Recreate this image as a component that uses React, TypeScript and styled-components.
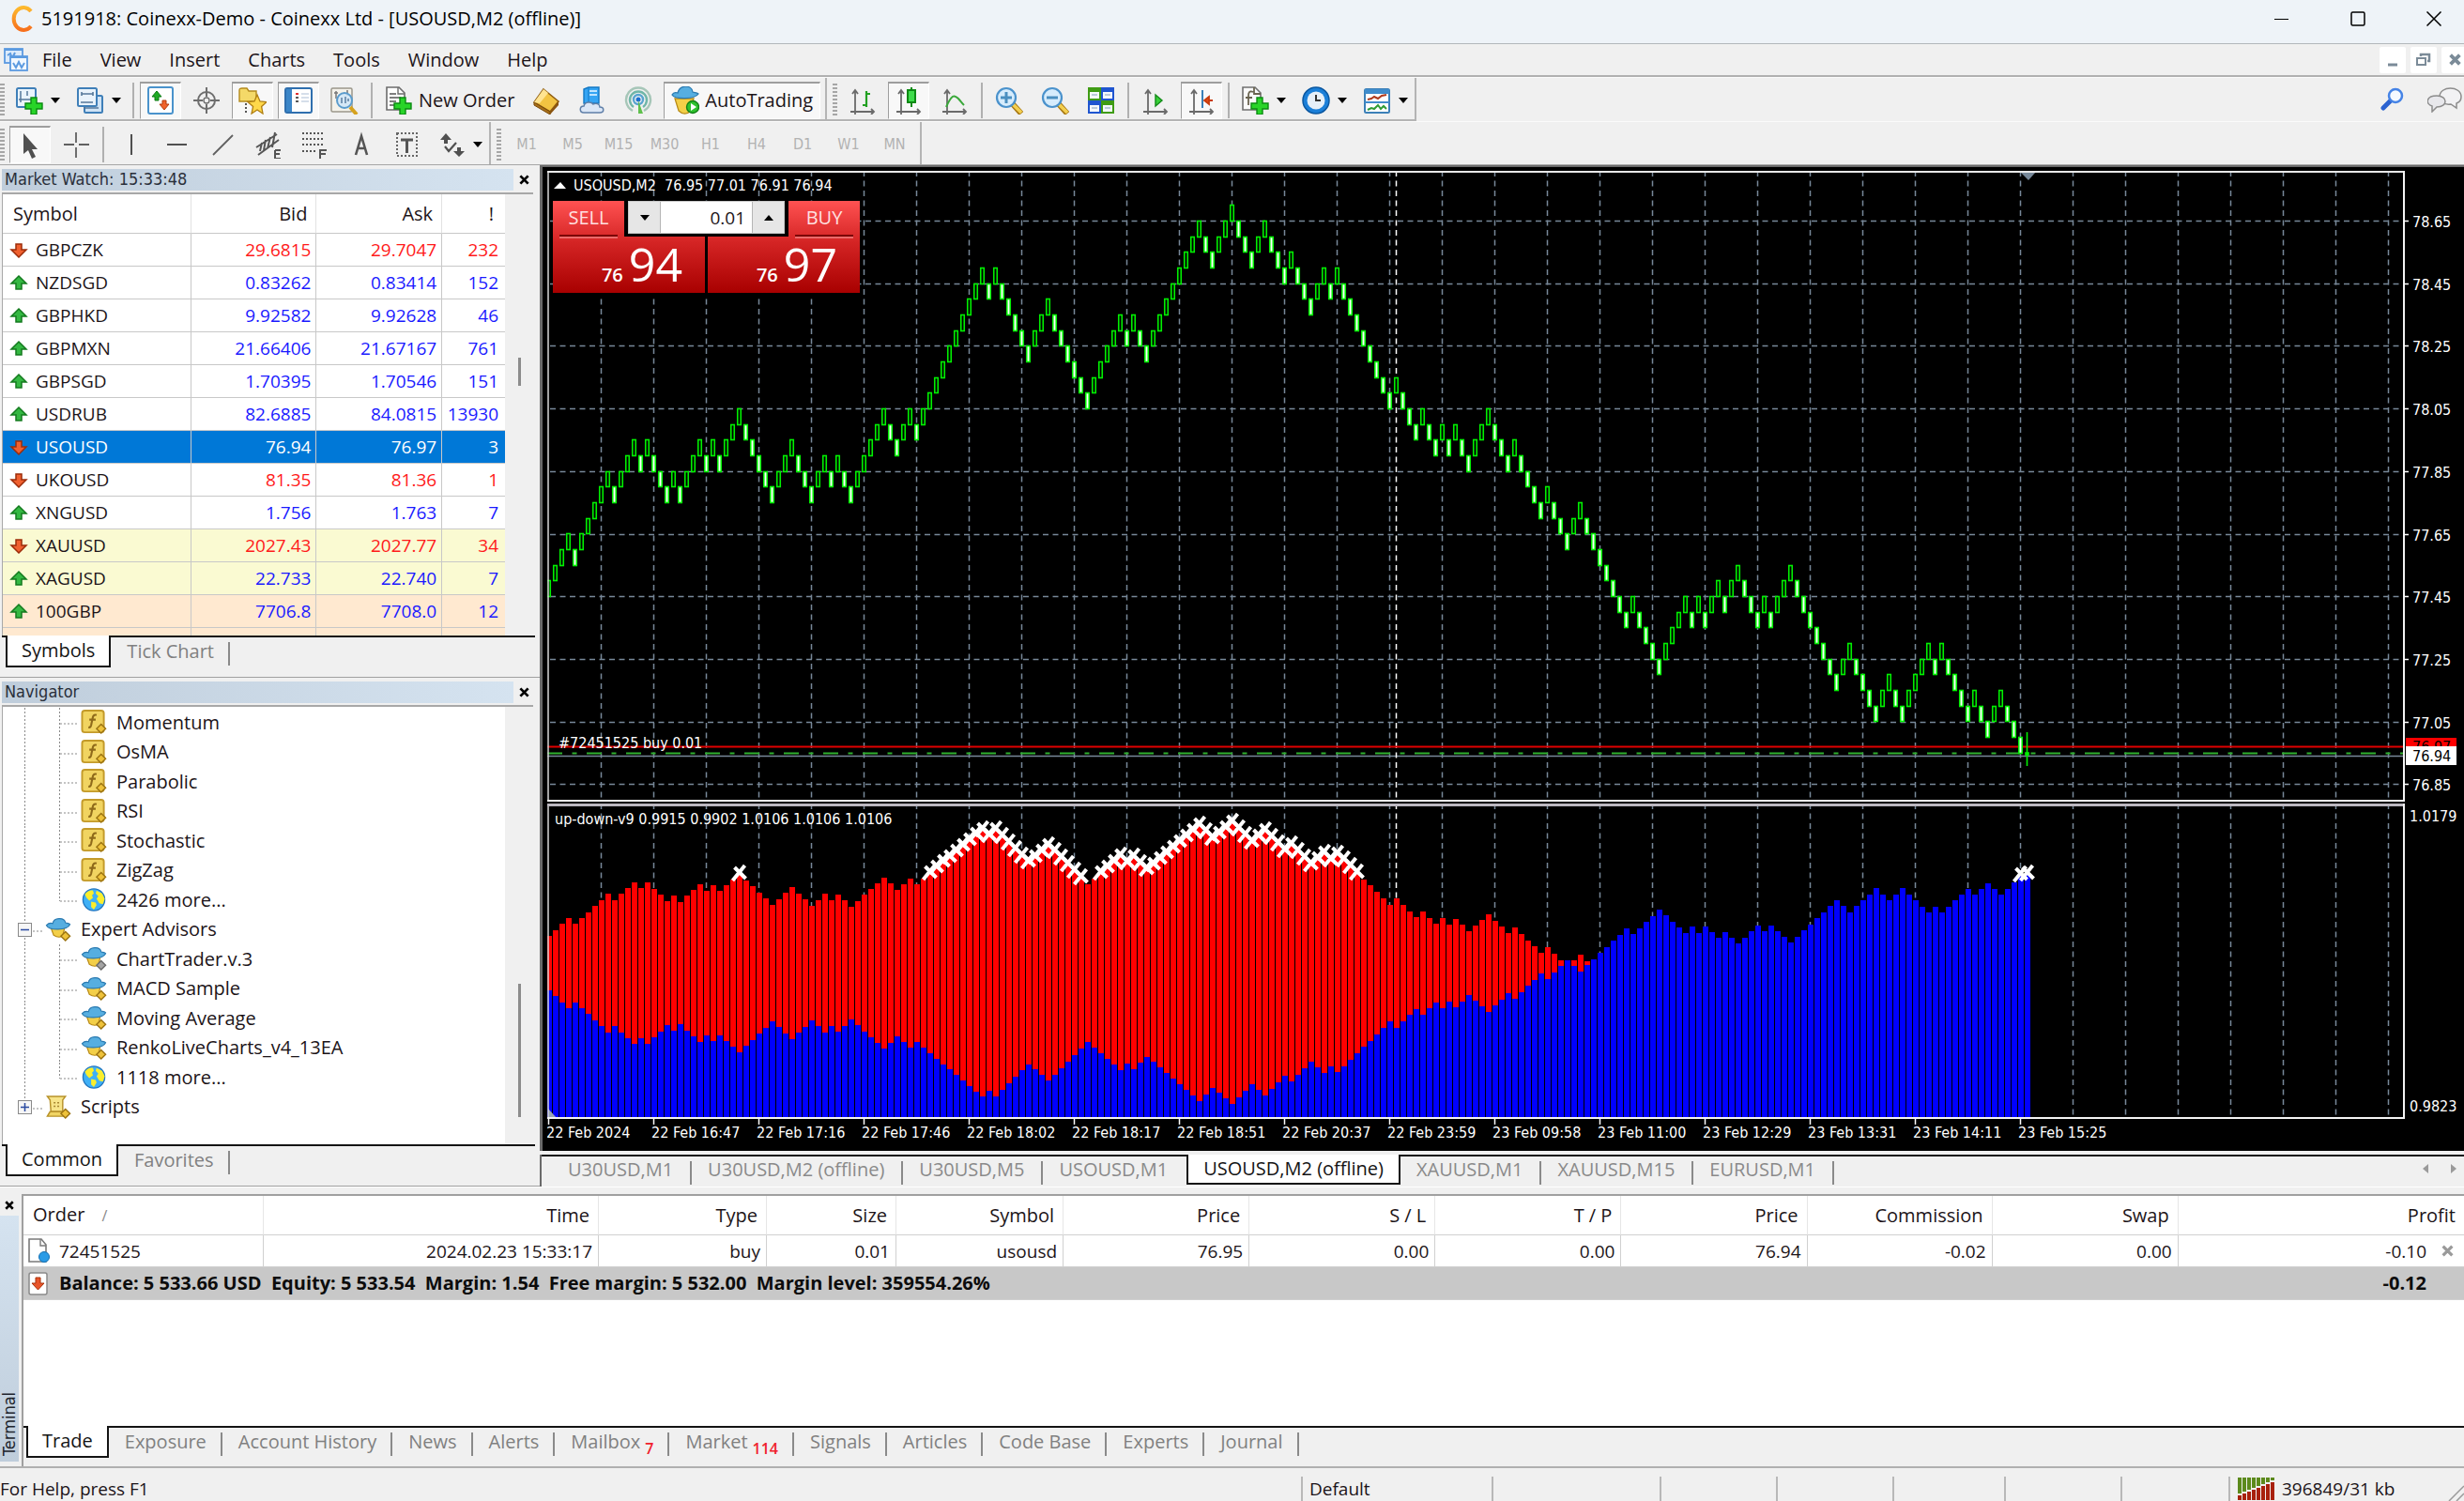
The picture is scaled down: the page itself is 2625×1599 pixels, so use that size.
import React, { useState } from "react";
import styled, { createGlobalStyle, css } from "styled-components";

const UI = `"Open Sans", "Noto Sans", sans-serif`;
const TAHOMA = `"DejaVu Sans Condensed", "Noto Sans", sans-serif`;

const Global = createGlobalStyle`
  *, *::before, *::after { box-sizing: border-box; }
  html, body { margin: 0; padding: 0; }
  body { background: #f0f0f0; font-family: ${UI}; font-size: 20px; line-height: 24px; color: #1c1418; }
  button, input { font: inherit; color: inherit; margin: 0; padding: 0; border: 0; background: none; border-radius: 0; }
  button { white-space: nowrap; }
  svg { display: block; flex: none; }
  ul { list-style: none; margin: 0; padding: 0; }
`;

const Shell = styled.div`
  display: flex;
  flex-direction: column;
  height: 100vh;
  overflow: hidden;
  white-space: nowrap;
`;

/* ---------- title bar and menu ---------- */

const TitleBar = styled.header`
  display: flex;
  align-items: center;
  flex: none;
  height: 47px;
  padding: 0 0 7px 11px;
  gap: 8px;
  background: #eef3f8;
  border-bottom: 1px solid #b3b7bb;
  color: #000;
`;

const TitleText = styled.h1`
  margin: 0;
  flex: 1;
  font-size: 20px;
  font-weight: 400;
  line-height: 26px;
`;

const WindowButton = styled.button`
  width: 81px;
  height: 40px;
  display: flex;
  align-items: center;
  justify-content: center;
`;

const WindowButtons = styled.div`
  display: flex;
  margin-right: -8px;
`;

const MenuBar = styled.nav`
  display: flex;
  align-items: center;
  flex: none;
  height: 35px;
  padding-left: 4px;
  border-bottom: 2px solid #b0b0b0;
`;

const MenuItem = styled.button`
  padding: 0 15px;
  height: 32px;
  &:first-of-type { padding-left: 14px; }
`;

const MdiButtons = styled.div`
  display: flex;
  gap: 5px;
  margin: 0 -4px 0 auto;
`;

const MdiButton = styled.button`
  width: 28px;
  height: 28px;
  display: flex;
  align-items: center;
  justify-content: center;
  background: #fff;
  border-radius: 2px;
`;

/* ---------- toolbars ---------- */

const ToolRow = styled.div<{ $last?: boolean }>`
  display: flex;
  flex: none;
  height: 47px;
  border-top: 1px solid #fbfbfb;
  ${(p) => p.$last && css`border-bottom: 1px solid #a5a5a5;`}
`;

const ToolGroup = styled.div<{ $line?: boolean }>`
  display: flex;
  align-items: center;
  gap: 5px;
  padding: 3px 5px 0 0;
  border-right: 2px solid #b4b4b4;
  ${(p) => p.$line && css`border-bottom: 2px solid #b4b4b4;`}
`;

const Grip = styled.span`
  width: 5px;
  height: 35px;
  background: repeating-linear-gradient(#a6a6a6 0 2px, #f0f0f0 2px 4px);
  ${ToolGroup} + ${ToolGroup} & { margin-left: 6px; }
`;

const Separator = styled.span`
  width: 2px;
  height: 38px;
  margin: 0 1px;
  background: #b0b0b0;
`;

const ToolButton = styled.button<{ $on?: boolean; $wide?: boolean }>`
  display: flex;
  align-items: center;
  justify-content: center;
  gap: 6px;
  width: ${(p) => (p.$wide ? "auto" : "44px")};
  padding: ${(p) => (p.$wide ? "0 7px" : "0")};
  height: 40px;
  ${(p) =>
    p.$on &&
    css`
      background: #f8f8f8;
      border-top: 2px solid #9e9e9e;
      border-left: 1px solid #9e9e9e;
      border-right: 1px solid #fff;
      border-bottom: 1px solid #fff;
    `}
`;

const SplitButton = styled.button`
  display: flex;
  align-items: center;
  gap: 8px;
  width: 60px;
  height: 40px;
  padding-left: 6px;
  &:last-child { width: 56px; }
`;

const Period = styled(ToolButton)`
  font-family: ${TAHOMA};
  font-size: 16px;
  color: #b2b2b2;
`;

const RowEnd = styled.div`
  display: flex;
  align-items: center;
  gap: 24px;
  margin-left: auto;
  padding-right: 2px;
`;

/* ---------- side panels ---------- */

const Workspace = styled.main`
  display: flex;
  flex: 1;
  min-height: 0;
`;

const SideColumn = styled.aside`
  display: flex;
  flex-direction: column;
  flex: none;
  width: 575px;
`;

const Panel = styled.section<{ $grow?: boolean }>`
  display: flex;
  flex-direction: column;
  ${(p) => (p.$grow ? css`flex: 1; min-height: 0;` : css`flex: none; height: 546px;`)}
  padding: 4px 5px 6px 2px;
  border-bottom: 1px solid #a0a0a0;
`;

const PanelTitle = styled.h2`
  display: flex;
  align-items: center;
  margin: 0;
  height: 23px;
  flex: none;
  font: 400 18px/22px ${TAHOMA};
  color: #2a2f3a;
`;

const PanelTitleText = styled.span`
  flex: 1;
  height: 23px;
  padding-left: 3px;
  background: linear-gradient(90deg, #bfcddb, #d5e3f0);
`;

const CloseButton = styled.button`
  width: 23px;
  height: 23px;
  display: flex;
  align-items: center;
  justify-content: center;
`;

const PanelBody = styled.div`
  display: flex;
  flex: 1;
  min-height: 0;
  margin: 2px 2px 0 0;
  border-top: 2px solid #a8a8a8;
  border-left: 1px solid #a8a8a8;
`;

const ScrollTrack = styled.div`
  width: 30px;
  flex: none;
  display: flex;
  justify-content: center;
  background: #f0f0f0;
`;

const ScrollThumb = styled.span<{ $top: number; $size: number }>`
  width: 3px;
  margin-top: ${(p) => p.$top}px;
  height: ${(p) => p.$size}px;
  background: #8c8c8c;
`;

const WatchView = styled.div`
  flex: 1;
  overflow: hidden;
  background: #fff;
`;

const WatchTable = styled.table`
  width: 100%;
  table-layout: fixed;
  border-collapse: separate;
  border-spacing: 0;
  th, td {
    padding: 0 5px 0 0;
    text-align: right;
    font-weight: 400;
    border-right: 1px solid #c8c8c8;
    border-bottom: 1px solid #c8c8c8;
  }
  th { height: 42px; padding-right: 9px; border-right-color: #e2e2e2; }
  td { height: 35px; font-size: 19px; }
  th:last-child, td:last-child { padding-right: 7px; border-right: 0; }
  th:last-child { padding-right: 12px; }
  th:first-child { padding-left: 11px; text-align: left; }
`;

const WatchRow = styled.tr<{ $bg: string; $ink: string; $selected?: boolean }>`
  background: ${(p) => (p.$selected ? "#0078d7" : p.$bg)};
  color: ${(p) => (p.$selected ? "#fff" : p.$ink)};
`;

const SymbolCell = styled.div<{ $selected?: boolean }>`
  display: flex;
  align-items: center;
  gap: 8px;
  padding-left: 7px;
  color: ${(p) => (p.$selected ? "#fff" : "#1c1418")};
`;

const Tabs = styled.div<{ $indent?: number; $tall?: boolean }>`
  display: flex;
  flex: none;
  height: ${(p) => (p.$tall ? "43px" : "38px")};
  padding-left: ${(p) => p.$indent ?? 4}px;
  position: relative;
  &::before {
    content: "";
    position: absolute;
    inset: 0 0 auto 0;
    height: 2px;
    background: #141414;
  }
`;

const Tab = styled.button<{ $active?: boolean; $sep?: boolean }>`
  display: flex;
  align-items: center;
  height: 34px;
  padding: 0 17px;
  color: #808080;
  position: relative;
  ${(p) =>
    p.$sep &&
    css`
      &::after {
        content: "";
        position: absolute;
        right: 0;
        top: 7px;
        width: 2px;
        height: 25px;
        background: #8a8a8a;
      }
    `}
  ${(p) =>
    p.$active &&
    css`
      color: #141414;
      background: #fff;
      padding: 0 15px;
      border: 2px solid #141414;
      border-top: 0;
    `}
`;

const Count = styled.span`
  font-size: 16px;
  font-weight: 600;
  line-height: 16px;
  color: #f0202c;
  margin: 14px 0 0 5px;
`;

const TreeView = styled.div`
  flex: 1;
  background: #fff;
  padding-top: 1px;
`;

const Tree = styled.ul`
  display: grid;
  grid-auto-rows: 1fr;
  height: 441px;
`;

const TreeRow = styled.li`
  display: flex;
  align-items: center;
  min-height: 0;
`;

const Guides = styled.svg`
  height: 100%;
  stroke: #8a8a8a;
  stroke-dasharray: 2 2;
`;

const TreeLabel = styled.span`
  padding-left: 10px;
`;

const Expander = styled.button`
  width: 15px;
  height: 15px;
  margin-left: 16px;
  border: 1px solid #8a8a8a;
  background: #f6f6f6;
  display: flex;
  align-items: center;
  justify-content: center;
`;

const RootRow = styled(TreeRow)`
  position: relative;
`;

const RootGuide = styled.svg`
  position: absolute;
  left: 0;
  top: 0;
  height: 100%;
  stroke: #8a8a8a;
  stroke-dasharray: 2 2;
`;

const RootBody = styled.div`
  position: relative;
  display: flex;
  align-items: center;
`;

const RootIcon = styled.span`
  margin-left: 14px;
`;

/* ---------- chart ---------- */

const ChartColumn = styled.div`
  display: flex;
  flex-direction: column;
  flex: 1;
  min-width: 0;
`;

const ChartWindow = styled.section`
  display: flex;
  flex-direction: column;
  flex: 1;
  min-height: 0;
  padding: 4px 0 0 5px;
  background: #000;
  border-top: 2px solid #6a6a6a;
  border-left: 3px solid #6a6a6a;
  position: relative;
`;

const ChartLine = styled.div<{ $height?: number }>`
  display: flex;
  ${(p) => (p.$height ? css`flex: none; height: ${p.$height}px;` : css`flex: 1; min-height: 0;`)}
`;

const Plot = styled.svg`
  flex: 1 1 0;
  min-width: 0;
  height: 100%;
  overflow: hidden;
`;

const Axis = styled.svg`
  width: 65px;
  height: 100%;
`;

const TradePanel = styled.div`
  position: absolute;
  left: 11px;
  top: 36px;
  display: flex;
  gap: 3px;
  padding-bottom: 6px;
  background: #000;
`;

const Deal = styled.button<{ $side: "sell" | "buy" }>`
  width: 162px;
  height: 98px;
  display: flex;
  flex-direction: column;
  color: #fff;
  background: linear-gradient(#ff5252, #d42424 45%, #a80000);
  clip-path: ${(p) =>
    p.$side === "sell"
      ? "polygon(0 0, 76px 0, 76px 38px, 100% 38px, 100% 100%, 0 100%)"
      : "polygon(86px 0, 100% 0, 100% 100%, 0 100%, 0 38px, 86px 38px)"};
`;

const DealName = styled.span<{ $side: "sell" | "buy" }>`
  align-self: ${(p) => (p.$side === "sell" ? "flex-start" : "flex-end")};
  width: 62px;
  margin: 0 7px;
  height: 38px;
  line-height: 36px;
  border-bottom: 2px solid #7c0000;
  box-shadow: 0 2px 0 #ea6a6a;
  color: #ffe0e0;
`;

const DealPrice = styled.span`
  display: flex;
  align-items: baseline;
  justify-content: flex-end;
  gap: 6px;
  padding-right: 24px;
  line-height: 58px;
`;

const Small = styled.span`
  font-size: 20px;
  font-weight: 600;
`;

const Big = styled.span`
  font-size: 50px;
`;

const Volume = styled.div`
  position: absolute;
  left: 80px;
  top: 0;
  width: 167px;
  height: 35px;
  display: flex;
  border: 1px solid #c9c9c9;
  background: #fff;
`;

const VolumeStep = styled.button`
  width: 33px;
  display: flex;
  align-items: center;
  justify-content: center;
  background: #e6e6e6;
`;

const VolumeInput = styled.input`
  flex: 1;
  min-width: 0;
  text-align: right;
  padding-right: 7px;
  outline: 0;
  border: solid #b5b5b5;
  border-width: 0 1px;
  font-size: 19px;
  line-height: 30px;
`;

const ChartTabs = styled(Tabs)`
  margin-top: 4px;
  padding-left: 11px;
  height: 34px;
  border-left: 2px solid #6a6a6a;
`;

const ChartTab = styled(Tab)`
  height: 32px;
  padding: 0 20px 0 17px;
  color: #8a8a8a;
  ${(p) => p.$active && css`color: #141414; padding: 0 16px;`}
`;

const TabScroll = styled.div`
  display: flex;
  align-items: center;
  gap: 24px;
  margin-left: auto;
  padding: 0 8px 4px 0;
`;

/* ---------- terminal ---------- */

const Terminal = styled.section`
  display: flex;
  flex: none;
  height: 300px;
  padding-top: 7px;
  border-top: 1px solid #fff;
  border-bottom: 2px solid #b0b0b0;
`;

const TerminalSide = styled.div`
  display: flex;
  flex-direction: column;
  align-items: center;
  width: 23px;
  padding: 0 3px 5px 0;
`;

const TerminalTitle = styled.h2`
  flex: 1;
  margin: 0;
  width: 20px;
  writing-mode: vertical-rl;
  transform: rotate(180deg);
  padding-top: 6px;
  font: 400 18px/20px ${TAHOMA};
  color: #20242c;
  background: linear-gradient(#bfcddb, #d5e3f0);
`;

const TerminalMain = styled.div`
  display: flex;
  flex-direction: column;
  flex: 1;
  min-width: 0;
  border-left: 2px solid #a0a0a0;
`;

const TerminalView = styled.div`
  flex: 1;
  min-height: 0;
  overflow: hidden;
  background: #fff;
  border-top: 2px solid #a0a0a0;
`;

const OrderTable = styled.table`
  width: 100%;
  table-layout: fixed;
  border-collapse: separate;
  border-spacing: 0;
  th, td {
    padding: 0 6px 0 0;
    text-align: right;
    font-weight: 400;
    border-right: 1px solid #d0d0d0;
    border-bottom: 1px solid #d0d0d0;
  }
  th { height: 42px; padding-right: 9px; border-right-color: #e6e6e6; }
  td { height: 34px; font-size: 19px; }
  th:first-child { text-align: left; padding-left: 10px; }
  th:last-child, td:last-child { border-right: 0; }
`;

const SummaryRow = styled.tr`
  background: #c8c8c8;
  color: #0c0c0c;
  td { height: 35px; font-weight: 700; font-size: 20px; border-right: 0; }
  td:last-child { padding-right: 40px; }
`;

const LeadCell = styled.div`
  display: flex;
  align-items: center;
  gap: 10px;
  padding-left: 4px;
`;

const ProfitCell = styled.div`
  display: flex;
  align-items: center;
  justify-content: flex-end;
  gap: 16px;
  padding-right: 5px;
`;

const SortMark = styled.span`
  margin-left: 18px;
  font-size: 16px;
  color: #8a8a8a;
`;

const StatusBar = styled.footer`
  display: flex;
  align-items: center;
  flex: none;
  height: 35px;
  padding-top: 9px;
  font-size: 19px;
`;

const StatusCell = styled.span<{ $w?: number }>`
  display: flex;
  align-items: center;
  gap: 6px;
  height: 26px;
  ${(p) => (p.$w ? css`width: ${p.$w}px; flex: none;` : css`flex: 1;`)}
  & + & { border-left: 2px solid #b8b8b8; padding-left: 7px; }
`;

const ResizeGrip = styled.svg`
  margin-left: auto;
  align-self: flex-end;
`;

/* ---------- icons ---------- */

const Ic: React.FC<{ s?: number; children: React.ReactNode }> = ({ s = 30, children }) => (
  <svg width={s} height={s} viewBox="0 0 30 30" fill="none" aria-hidden="true">
    {children}
  </svg>
);

const Caret = () => (
  <svg width="10" height="6" viewBox="0 0 10 6" aria-hidden="true"><path d="M0 0h10L5 6z" fill="#000" /></svg>
);
const CaretUp = () => (
  <svg width="10" height="6" viewBox="0 0 10 6" aria-hidden="true"><path d="M0 6h10L5 0z" fill="#000" /></svg>
);
const Plus = ({ x = 11, y = 12 }: { x?: number; y?: number }) => (
  <path transform={`translate(${x} ${y})`} d="M6 0h6v6h6v6h-6v6H6v-6H0V6h6z" fill="#28d428" stroke="#0b8a12" strokeWidth="1.4" />
);
const Axes = () => (
  <path d="M7 5v25M2 27h24M4 8l3-4 3 4M24 24l3 3-3 3" stroke="#6a6a6a" strokeWidth="1.800" />
);
const Cross = ({ c = "#000", s = 12, w = 3 }: { c?: string; s?: number; w?: number }) => (
  <svg width={s} height={s} viewBox="0 0 12 12" aria-hidden="true">
    <path d="M1.5 1.5l9 9M10.5 1.5l-9 9" stroke={c} strokeWidth={w} />
  </svg>
);

const ICONS: Record<string, React.ReactNode> = {
  newChart: (<><rect x="2" y="2" width="20" height="20" rx="1.5" fill="#eaf4fc" stroke="#3f7fb8" strokeWidth="2" /><path d="M6 5v12M4 14h13M13 5v5" stroke="#56789a" strokeWidth="1.5" /><Plus /></>),
  profiles: (<><rect x="9" y="10" width="19" height="18" rx="1.5" fill="#cfe3f5" stroke="#3f7fb8" strokeWidth="2" /><rect x="2" y="2" width="20" height="19" rx="1.5" fill="#e9f3fb" stroke="#3f7fb8" strokeWidth="2" /><path d="M6 8h12M6 6v4M18 6v4M5 17h13M8 23h16" stroke="#56789a" strokeWidth="1.6" /></>),
  market: (<><rect x="2" y="1" width="26" height="28" rx="2" fill="#fff" stroke="#4a93cc" strokeWidth="2" /><path d="M11 5l5 6h-3v4H9v-4H6z" fill="#1faa25" stroke="#0c7a12" /><path d="M19 25l-5-6h3v-4h4v4h3z" fill="#f0632c" stroke="#b33a0c" /></>),
  target: (<g stroke="#6e6e6e" strokeWidth="2"><circle cx="15" cy="15" r="9" /><circle cx="15" cy="15" r="3" strokeWidth="1.4" /><path d="M15 1v10M15 19v10M1 15h10M19 15h10" /></g>),
  favorites: (<><path d="M1 4c0-2 1-2 3-2h5l2 3h8v11H1z" fill="#f4d968" stroke="#b48a1c" strokeWidth="1.4" /><path d="M8 18v12" stroke="#555" strokeWidth="2" strokeDasharray="2 2" /><path d="M20 9l3 7 7 .6-5.400 4.800L26 29l-6-4-6 4 1.600-7.600L10 16.600l7-.6z" fill="#ffd84a" stroke="#b07f12" strokeWidth="1.3" /></>),
  data: (<><rect x="1" y="2" width="28" height="26" rx="2" fill="#fff" stroke="#2f6fae" strokeWidth="2" /><path d="M2 3h6v24H2z" fill="#3b86c8" /><path d="M12 8h3" stroke="#e03030" strokeWidth="2" /><path d="M12 12h3M12 16h3" stroke="#222" strokeWidth="1.6" /><path d="M18 8h8M18 12h8M18 16h8" stroke="#c8d4e4" strokeWidth="1.4" /></>),
  tester: (<><rect x="1" y="2" width="22" height="25" rx="1.5" fill="#f4f2ea" stroke="#9a968a" strokeWidth="1.5" /><path d="M6 5v8M4 7h4M18 4v6" stroke="#777" strokeWidth="1.5" /><path d="M21 22l7 8" stroke="#d6a21e" strokeWidth="4" /><circle cx="15" cy="15" r="8" fill="#cfe6f8" fillOpacity=".85" stroke="#5b9ccc" strokeWidth="2" /><path d="M12 12v6M16 11v7M19 13v3" stroke="#5b7ea0" strokeWidth="1.5" /></>),
  newOrder: (<><path d="M2 1h13l6 6v18H2z" fill="#fff" stroke="#6c6c6c" strokeWidth="1.6" /><path d="M14 1v7h7" stroke="#6c6c6c" strokeWidth="1.4" /><path d="M5 8h7M5 12h12M5 16h7M5 20h5" stroke="#555" strokeWidth="1.6" /><Plus x={10} y={12} /></>),
  book: (<><path d="M12 3l16 13-9 11L2 17z" fill="#f2c342" stroke="#8f5c0e" strokeWidth="1.6" /><path d="M2 17l17 10v3L2 20z" fill="#a9701a" stroke="#7a4b0a" /><path d="M19 27l9-11v4l-9 10z" fill="#8a5410" /><path d="M12 3l5 4-9 11-6-1z" fill="#ffe391" /></>),
  server: (<><path d="M6 3l5-2h11v17H6z" fill="#35a5f4" stroke="#1378c4" strokeWidth="1.4" /><path d="M11 1v16" stroke="#1378c4" /><path d="M12 5h8M12 9h8" stroke="#bfe4ff" strokeWidth="2" /><path d="M6 28c-5 0-5-7 0-7 1-5 8-5 10-2 3-2 7 0 7 3 5 0 5 6 0 6z" fill="#dbe6f6" stroke="#5f7fa8" strokeWidth="1.5" /></>),
  signal: (<g strokeWidth="2.400"><path d="M9 26A13 13 0 1 1 21 26" stroke="#a6c6b8" /><path d="M10 22A9 9 0 1 1 20 22" stroke="#6fb6a8" /><circle cx="15" cy="14" r="5" stroke="#58a4d0" /><circle cx="15" cy="14" r="2.500" fill="#1c6fd0" /><path d="M15 15l5 14h-5z" fill="#5fc04c" /></g>),
  auto: (<><path d="M4 13h20l-3 13c-4 4-9 4-13 0z" fill="#f3cf48" stroke="#b88a16" strokeWidth="1.3" /><path d="M1 9c3 5 24 5 28-1-2-2-4-1-6-2-1-8-14-8-16 1-3-1-5 0-6 2z" fill="#56aee0" stroke="#2b7ab0" strokeWidth="1.3" /><circle cx="23" cy="22" r="6.500" fill="#2ec22e" stroke="#128016" strokeWidth="1.4" /><path d="M21 18l6 4-6 4z" fill="#fff" /></>),
  bars: (<><Axes /><path d="M19 5v17M19 8h4M15 20h4" stroke="#22a022" strokeWidth="2.200" /></>),
  candles: (<><Axes /><path d="M18 1v21" stroke="#0c8a14" strokeWidth="2" /><rect x="14" y="4" width="8" height="13" fill="#3fdc4c" stroke="#0c8a14" strokeWidth="2" /></>),
  lineChart: (<><Axes /><path d="M6 22C10 13 13 9 16 11c3 1 6 6 9 9" stroke="#3aa83a" strokeWidth="2" /></>),
  zoomIn: (<><path d="M19 19l9 10" stroke="#a87812" strokeWidth="6" /><path d="M19 19l9 9" stroke="#f4d050" strokeWidth="3.500" /><circle cx="12" cy="12" r="10" fill="#d6ecfc" stroke="#4a92cc" strokeWidth="2.200" /><path d="M12 6v12M6 12h12" stroke="#4a8fc0" strokeWidth="3" /></>),
  zoomOut: (<><path d="M19 19l9 10" stroke="#a87812" strokeWidth="6" /><path d="M19 19l9 9" stroke="#f4d050" strokeWidth="3.500" /><circle cx="12" cy="12" r="10" fill="#d6ecfc" stroke="#4a92cc" strokeWidth="2.200" /><path d="M6 12h12" stroke="#4a8fc0" strokeWidth="3" /></>),
  tiles: (<><path d="M1 1h14v14H1z" fill="#3f9c14" /><path d="M15 1h14v14H15z" fill="#1f55d0" /><path d="M1 15h14v14H1z" fill="#1f55d0" /><path d="M15 15h14v14H15z" fill="#3f9c14" /><path d="M3 6h10v7H3zM17 6h10v7H17zM3 20h10v7H3zM17 20h10v7H17z" fill="#f4f8fc" /><path d="M5 9h6M19 9h6M5 23h6M19 23h6" stroke="#a8bcd0" strokeWidth="1.400" /></>),
  scroll: (<><Axes /><path d="M15 9l7 6-7 6z" fill="#38d038" stroke="#128a18" strokeWidth="1.400" /></>),
  shift: (<><Axes /><path d="M16 4v19" stroke="#3a80b8" strokeWidth="2" /><path d="M27 15h-5M23 11l-5 4 5 4z" fill="#e04a14" stroke="#c83a0c" strokeWidth="1.800" /></>),
  indicators: (<><path d="M2 1h13l6 6v18H2z" fill="#fafafa" stroke="#707070" strokeWidth="1.600" /><path d="M14 1v7h7M13 6c-4-2-5 1-5 4v10M5 12h7" stroke="#6a6450" strokeWidth="1.800" /><Plus x={11} y={12} /></>),
  clock: (<><circle cx="15" cy="15" r="14" fill="#1b7fd8" stroke="#0b57a0" strokeWidth="1.500" /><circle cx="15" cy="15" r="9.500" fill="#e6eff8" /><path d="M15 9v6h5" stroke="#333" strokeWidth="2" /></>),
  template: (<><rect x="2" y="3" width="26" height="25" rx="1.500" fill="#fff" stroke="#3c80b8" strokeWidth="2" /><path d="M2 3h26v5H2zM2 16h26v2H2z" fill="#3f8ccc" /><path d="M5 14l4-1 3-2 4 2 4-3 5-1" stroke="#b03a1c" strokeWidth="2" /><path d="M5 25l4-2 3 1 4-4 3 4 3-3 3 3" stroke="#2f9c34" strokeWidth="2" /></>),
  cursor: (<path d="M8 2v22l5-4 4 9 4-2-4-8h6z" fill="#505050" />),
  cross: (<path d="M15 2v11M15 18v11M2 15h11M18 15h11" stroke="#606060" strokeWidth="1.800" />),
  vline: (<path d="M16 4v22" stroke="#505050" strokeWidth="2" />),
  hline: (<path d="M5 15h21" stroke="#505050" strokeWidth="2" />),
  trend: (<path d="M5 26L26 5" stroke="#606060" strokeWidth="1.800" />),
  channel: (<path d="M2 18L24 4M4 26L26 10M8 13l-2 9M12 10l-2 11M17 7l-3 12M22 2l-3 16M22 21v9h6M22 21h6M22 25h5" stroke="#555" strokeWidth="2" />),
  fibo: (<><path d="M2 3h24M2 9h24M2 15h24M2 22h15" stroke="#555" strokeWidth="2" strokeDasharray="2 2" /><path d="M21 30v-9h7M21 25h6" stroke="#555" strokeWidth="2" /></>),
  text: (<path d="M10 26l6-20 6 20M12 19h8" stroke="#555" strokeWidth="2.600" />),
  label: (<><rect x="5" y="3" width="21" height="24" stroke="#666" strokeWidth="2" strokeDasharray="2 2" /><path d="M9 10h13M15.500 10v14" stroke="#555" strokeWidth="3" /></>),
  arrows: (<><path d="M9 3l6 7h-4v4H7v-4H3z" fill="#505050" /><path d="M23 28l-6-6h4v-4h4v4h4z" fill="#505050" /><path d="M8 17l4 5 8-9" stroke="#505050" strokeWidth="2.200" /></>),
};

const SearchIcon = () => (
  <svg width="26" height="26" viewBox="0 0 26 26" fill="none" aria-hidden="true">
    <path d="M3 22l9-9" stroke="#2b62d0" strokeWidth="5" strokeLinecap="round" />
    <circle cx="16" cy="9" r="7" fill="#f6f9ff" stroke="#4583e6" strokeWidth="2.500" />
  </svg>
);

const ChatIcon = () => (
  <svg width="37" height="28" viewBox="0 0 37 28" fill="none" stroke="#8c8c8c" strokeWidth="1.500" aria-hidden="true">
    <path d="M31 18v5l-6-4c-8 1-12-3-12-8 0-12 23-12 23 0 0 3-2 6-5 7z" fill="#f2f2f4" />
    <path d="M5 21v6l5-5c12 0 12-12 0-12s-12 9-5 11z" fill="#e8e8ec" />
  </svg>
);

const Logo = () => (
  <svg width="25" height="30" viewBox="0 0 25 30" fill="none" aria-hidden="true">
    <defs><linearGradient id="logo" x1="0" y1="0" x2="0" y2="1"><stop offset="0" stopColor="#fdb92e" /><stop offset="1" stopColor="#f7701d" /></linearGradient></defs>
    <path d="M22 7A10.500 12 0 1 0 22 23" stroke="url(#logo)" strokeWidth="4" />
  </svg>
);

const MdiIcon = () => (
  <svg width="27" height="27" viewBox="0 0 27 27" fill="none" stroke="#5b9ae0" strokeWidth="1.800" aria-hidden="true">
    <rect x="1" y="2" width="19" height="15" fill="#dcebfb" />
    <path d="M1 3h19M4 9l3-2 2 5 3-6" strokeWidth="2" />
    <rect x="7" y="10" width="18" height="15" fill="#f2f8ff" />
    <path d="M7 11h18M10 17l3 5 3-6 3 6 3-5" strokeWidth="2" />
  </svg>
);

const Tick = ({ up }: { up: boolean }) => (
  <svg width="20" height="18" viewBox="0 0 20 18" aria-hidden="true">
    {up ? (
      <path d="M10 2l8 8h-5v6H7v-6H2z" fill="#34b842" stroke="#137a1e" strokeWidth="1.500" />
    ) : (
      <path d="M10 17L2 9h5V3h6v6h5z" fill="#f0602f" stroke="#9c2c0a" strokeWidth="1.500" />
    )}
  </svg>
);

const Gem = ({ c = "#eec23a", e = "#9c7412" }: { c?: string; e?: string }) => (
  <path d="M22 16l5 5-5 5-5-5z" fill={c} stroke={e} strokeWidth="1.500" />
);

const FunctionIcon = () => (
  <svg width="28" height="27" viewBox="0 0 28 28" fill="none" aria-hidden="true">
    <rect x="1" y="1" width="24" height="24" rx="3" fill="#f1d461" stroke="#c39a2a" strokeWidth="2" />
    <path d="M17 6c-3-1-4 1-4.500 4L11 17c-.5 2-1 3-3 2.500M9 11h7" stroke="#8f6a1a" strokeWidth="2.200" />
    <Gem />
  </svg>
);

const GlobeIcon = () => (
  <svg width="28" height="27" viewBox="0 0 28 28" fill="none" aria-hidden="true">
    <circle cx="14" cy="14" r="12" fill="#3fb0f6" stroke="#2176c0" strokeWidth="1.400" />
    <path d="M4 8c3-4 7-5 9-4l1 3-2 2 1 3-4 3-3-3zM11 16l5 1 1 3-3 5-3-3zM17 4l6 3 3 6-2 6-4-1-3-5 2-3-3-3z" fill="#fbee2c" />
  </svg>
);

const ExpertIcon = ({ grey }: { grey?: boolean }) => (
  <svg width="28" height="27" viewBox="0 0 28 28" fill="none" aria-hidden="true">
    <path d="M6 12h15l-2 9c-4 2-7 1-10-1z" fill="#f3cf48" stroke="#b88a16" strokeWidth="1.200" />
    <path d="M1 9c3 6 23 6 26-1-2-2-4-1-5-2C21 0 9 0 8 7c-3-1-5 0-7 2z" fill="#56aee0" stroke="#2b7ab0" strokeWidth="1.200" />
    {grey ? <Gem c="#a4a4a4" e="#6a6a6a" /> : <Gem />}
  </svg>
);

const ScriptIcon = () => (
  <svg width="28" height="27" viewBox="0 0 28 28" fill="none" aria-hidden="true">
    <path d="M2 2h20l-3 4v13H6L5 6z" fill="#f7e489" stroke="#b8922a" strokeWidth="1.500" />
    <path d="M5 19h15l2 5H2z" fill="#f0d463" stroke="#b8922a" strokeWidth="1.500" />
    <path d="M9 9h2M13 9h2M9 13h2M13 13h2" stroke="#a58430" strokeWidth="1.500" />
    <Gem />
  </svg>
);

const OrderIcon = () => (
  <svg width="24" height="27" viewBox="0 0 24 27" fill="none" aria-hidden="true">
    <path d="M2 1h13l5 6v18H2z" fill="#fff" stroke="#7a7a7a" strokeWidth="1.600" />
    <path d="M14 1v7h6" stroke="#7a7a7a" strokeWidth="1.400" />
    <circle cx="18" cy="20" r="5.500" fill="#2a9be6" stroke="#1270b4" />
  </svg>
);

const BalanceIcon = () => (
  <svg width="24" height="25" viewBox="0 0 24 25" fill="none" aria-hidden="true">
    <rect x="2" y="1" width="19" height="23" rx="2" fill="#fff" stroke="#8a8a8a" strokeWidth="1.500" />
    <path d="M11.500 19L5 12h4V6h5v6h4z" fill="#e8552a" stroke="#a83008" />
  </svg>
);

const LinkMeter = () => (
  <svg width="42" height="24" viewBox="0 0 42 24" aria-hidden="true">
    {Array.from({ length: 8 }, (_, i) => {
      const split = 17 - i * 2;
      return (
        <g key={i}>
          <rect x={i * 5 + 1} y="0" width="4" height={split} fill="#5c8a1c" />
          <rect x={i * 5 + 1} y={split + 2} width="4" height={22 - split} fill="#a8200c" />
        </g>
      );
    })}
  </svg>
);

/* ---------- data ---------- */

type Quote = [string, string, string, string, boolean, string?];
const QUOTES: Quote[] = [
  ["GBPCZK", "29.6815", "29.7047", "232", false],
  ["NZDSGD", "0.83262", "0.83414", "152", true],
  ["GBPHKD", "9.92582", "9.92628", "46", true],
  ["GBPMXN", "21.66406", "21.67167", "761", true],
  ["GBPSGD", "1.70395", "1.70546", "151", true],
  ["USDRUB", "82.6885", "84.0815", "13930", true],
  ["USOUSD", "76.94", "76.97", "3", false],
  ["UKOUSD", "81.35", "81.36", "1", false],
  ["XNGUSD", "1.756", "1.763", "7", true],
  ["XAUUSD", "2027.43", "2027.77", "34", false, "#fafad2"],
  ["XAGUSD", "22.733", "22.740", "7", true, "#fafad2"],
  ["100GBP", "7706.8", "7708.0", "12", true, "#ffe9d0"],
];

// Renko levels at each reversal; every brick between two of them moves one level.
const PIVOTS = [
  0, 3, 2, 7, 6, 9, 8, 9, 6, 7, 6, 9, 8, 9, 8, 11, 6, 9, 6, 8, 7, 8, 6, 11, 9, 11, 10, 20, 19, 20, 15, 18, 12, 17, 16,
  17, 15, 23, 21, 24, 21, 23, 20, 21, 18, 20, 19, 20, 12, 13, 10, 11, 9, 10, 9, 10, 8, 11, 8, 9, 5, 6, 3, 5, -2, -1,
  -5, -1, -2, -1, -2, 0, -1, 1, -2, -1, -2, 1, -6, -4, -8, -6, -8, -4, -5, -4, -8, -7, -9, -7, -10,
];

const BRICKS: { level: number; up: boolean }[] = [{ level: 0, up: true }];
for (let i = 1; i < PIVOTS.length; i++) {
  const dir = PIVOTS[i] > PIVOTS[i - 1] ? 1 : -1;
  for (let l = PIVOTS[i - 1] + dir; l !== PIVOTS[i] + dir; l += dir) BRICKS.push({ level: l, up: dir > 0 });
}

// Moving-average drift of the oscillator, as [brick, pixels].
const DRIFT: [number, number][] = [
  [0, 0], [13, 0], [29, 4], [34, 5], [46, 7], [57, 9], [66, 14], [73, 17], [82, 21], [91, 25], [99, 29], [104, 32],
  [113, 37], [120, 40], [128, 43], [140, 46], [151, 50], [157, 52], [169, 54], [181, 56], [196, 58], [222, 57], [226, 61],
];
const drift = (i: number) => {
  const k = DRIFT.findIndex((d) => d[0] > i);
  const [x0, y0] = DRIFT[k - 1];
  const [x1, y1] = DRIFT[k];
  return y0 + ((y1 - y0) * (i - x0)) / (x1 - x0);
};

const STEP = 7;
const X0 = 1.5;
const GRID = 56;
const priceY = (p: number) => Math.round(53 + (78.65 - p) * 333.5) + 0.5;
const levelY = (l: number) => Math.round(53 + (24 - l) * 16.67) + 0.5;
const PRICES = Array.from({ length: 10 }, (_, i) => 78.65 - i * 0.2);
const COLS = Array.from({ length: 60 }, (_, i) => X0 + GRID * (i + 1));
const TIMES = [
  "22 Feb 2024", "22 Feb 16:47", "22 Feb 17:16", "22 Feb 17:46", "22 Feb 18:02", "22 Feb 18:17", "22 Feb 18:51",
  "22 Feb 20:37", "22 Feb 23:59", "23 Feb 09:58", "23 Feb 11:00", "23 Feb 12:29", "23 Feb 13:31", "23 Feb 14:11",
  "23 Feb 15:25",
];
const SLATE = "#778899";
const isMarked = (i: number) => i === 29 || (i >= 58 && i <= 81) || (i >= 84 && i <= 123) || i >= 224;

const chartFont = { fontFamily: TAHOMA, fontSize: 16 };

const PricePlot = () => (
  <Plot role="img" aria-label="USOUSD,M2 price chart">
    <g stroke={SLATE} strokeWidth="1.500">
      <g strokeDasharray="6 4.500">
        {COLS.map((x) => <line key={x} x1={x} x2={x} y1="0" y2="100%" />)}
        {PRICES.map((p) => <line key={p} x1="3" x2="100%" y1={priceY(p)} y2={priceY(p)} />)}
      </g>
      <line x1="0" x2="100%" y1={priceY(76.94)} y2={priceY(76.94)} />
    </g>
    <line x1={X0 + 129 * STEP} x2={X0 + 129 * STEP} y1="0" y2="100%" stroke="#fff" strokeWidth="1.500" strokeDasharray="6 4.500" />
    <line x1="0" x2="100%" y1={priceY(76.97)} y2={priceY(76.97)} stroke="#e00000" strokeWidth="2" />
    <line x1="0" x2="100%" y1={priceY(76.95)} y2={priceY(76.95)} stroke="#2fb02f" strokeWidth="2" strokeDasharray="16 10.500 5 10.500" />
    <g stroke="#00f000" strokeWidth="1.600">
      {BRICKS.map((b, i) => {
        const top = levelY(b.level + 1);
        return (
          <rect key={i} x={X0 + i * STEP - 1.75} y={top} width="3.500" height={levelY(b.level) - top} fill={b.up ? "#000" : "#fff"} />
        );
      })}
      <path d={`M${X0 + 225 * STEP} 598v36`} />
      <rect x={X0 + 225 * STEP - 1.5} y="620" width="3" height="2" fill="#00f000" />
    </g>
    <path d="M1569 1h17l-8 9z" fill={SLATE} />
    <path d="M7 19h13l-6-7z" fill="#fff" />
    <text x="28" y="21" fill="#fff" style={{ ...chartFont, whiteSpace: "pre" }}>{"USOUSD,M2  76.95 77.01 76.91 76.94"}</text>
    <text x="12" y="615" fill="#fff" style={chartFont}>#72451525 buy 0.01</text>
    <path d="M1 0v700" stroke="#d8d8d8" strokeWidth="1.500" />
    <line x1="0" x2="100%" y1="1" y2="1" stroke="#e8e8e8" strokeWidth="2" />
    <line x1="0" x2="100%" y1="671" y2="671" stroke="#f4f4f4" strokeWidth="2" />
  </Plot>
);

const PriceAxis = () => (
  <Axis aria-hidden="true">
    <path d="M1 0v672" stroke="#f4f4f4" strokeWidth="2" />
    {PRICES.map((p) => (
      <g key={p}>
        <path d={`M1 ${priceY(p)}h5`} stroke="#fff" strokeWidth="1.500" />
        <text x="10" y={priceY(p) + 6} fill="#fff" style={chartFont}>{p.toFixed(2)}</text>
      </g>
    ))}
    <rect x="3" y="604" width="54" height="18" fill="#f00" />
    <text x="10" y="619" fill="#000" style={chartFont}>76.97</text>
    <rect x="3" y="613" width="54" height="20" fill="#fff" />
    <text x="10" y="629" fill="#000" style={chartFont}>76.94</text>
  </Axis>
);

const FLOOR = 334;
const OscillatorPlot = () => (
  <Plot role="img" aria-label="up-down-v9 indicator">
    <g stroke={SLATE} strokeWidth="1.500" strokeDasharray="6 4.500">
      {COLS.map((x) => <line key={x} x1={x} x2={x} y1="0" y2="100%" />)}
    </g>
    <line x1={X0 + 129 * STEP} x2={X0 + 129 * STEP} y1="0" y2="100%" stroke="#fff" strokeWidth="1.500" strokeDasharray="6 4.500" />
    {[...BRICKS, { level: -10, up: false }].map((b, i) => {
      const red = Math.round(141 - b.level * 6.37 + drift(i));
      const blue = 340 - red;
      return (
        <g key={i}>
          {red < blue && <rect x={i * STEP - 1} y={red} width="6" height={FLOOR - red} fill="#f00" />}
          <rect x={i * STEP - 1} y={blue} width="6" height={FLOOR - blue} fill="#00f" />
        </g>
      );
    })}
    <g stroke="#fff" strokeWidth="4">
      {[...BRICKS, { level: -10, up: false }].map((b, i) => {
        if (!isMarked(i)) return null;
        const red = Math.round(141 - b.level * 6.37 + drift(i));
        const y = Math.min(red, 340 - red) - 1;
        const x = X0 + i * STEP;
        return <path key={i} d={`M${x - 7} ${y + 8}L${x + 6} ${y - 8}M${x - 5} ${y - 6}L${x + 7} ${y + 6}`} />;
      })}
    </g>
    <path d="M1 325l9 10H1z" fill="#9aa6b4" />
    <text x="8" y="22" fill="#fff" style={chartFont}>up-down-v9 0.9915 0.9902 1.0106 1.0106 1.0106</text>
    <path d="M1 0v336" stroke="#d8d8d8" strokeWidth="1.500" />
    <line x1="0" x2="100%" y1="1.500" y2="1.500" stroke="#bcb8c0" strokeWidth="3" />
    <line x1="0" x2="100%" y1="335" y2="335" stroke="#f4f4f4" strokeWidth="2" />
  </Plot>
);

const OscillatorAxis = () => (
  <Axis aria-hidden="true">
    <path d="M1 0v336" stroke="#f4f4f4" strokeWidth="2" />
    <text x="7" y="19" fill="#fff" style={chartFont}>1.0179</text>
    <text x="7" y="328" fill="#fff" style={chartFont}>0.9823</text>
  </Axis>
);

const TimeAxis = () => (
  <Plot aria-label="Time axis">
    {TIMES.map((t, i) => (
      <g key={t}>
        <path d={`M${X0 + i * 112} 0v6`} stroke="#fff" strokeWidth="1.500" />
        <text x={i * 112 - 1} y="20" fill="#fff" style={chartFont}>{t}</text>
      </g>
    ))}
  </Plot>
);

/* ---------- sections ---------- */

const Tool = ({ icon, label, on }: { icon: string; label: string; on?: boolean }) => (
  <ToolButton $on={on} aria-label={label} aria-pressed={on}><Ic>{ICONS[icon]}</Ic></ToolButton>
);
const Split = ({ icon, label }: { icon: string; label: string }) => (
  <SplitButton aria-label={label}><Ic>{ICONS[icon]}</Ic><Caret /></SplitButton>
);

const Toolbars = () => (
  <>
    <ToolRow>
      <ToolGroup $line>
        <Grip />
        <Split icon="newChart" label="New chart" />
        <Split icon="profiles" label="Profiles" />
        <Separator />
        <Tool icon="market" label="Market Watch" on />
        <Tool icon="target" label="Crosshair mode" />
        <Tool icon="favorites" label="Navigator" on />
        <Tool icon="data" label="Terminal" on />
        <Tool icon="tester" label="Strategy Tester" />
        <Separator />
        <ToolButton $wide><Ic>{ICONS.newOrder}</Ic>New Order</ToolButton>
        <Tool icon="book" label="MetaEditor" />
        <Tool icon="server" label="Hosting" />
        <Tool icon="signal" label="Signals" />
        <ToolButton $wide $on aria-pressed><Ic>{ICONS.auto}</Ic>AutoTrading</ToolButton>
      </ToolGroup>
      <ToolGroup $line>
        <Grip />
        <Tool icon="bars" label="Bar chart" />
        <Tool icon="candles" label="Candlesticks" on />
        <Tool icon="lineChart" label="Line chart" />
        <Separator />
        <Tool icon="zoomIn" label="Zoom in" />
        <Tool icon="zoomOut" label="Zoom out" />
        <Tool icon="tiles" label="Tile windows" />
        <Separator />
        <Tool icon="scroll" label="Auto scroll" />
        <Tool icon="shift" label="Chart shift" on />
        <Separator />
        <Split icon="indicators" label="Indicators" />
        <Split icon="clock" label="Periods" />
        <Split icon="template" label="Templates" />
      </ToolGroup>
      <RowEnd>
        <button aria-label="Search"><SearchIcon /></button>
        <button aria-label="Chat"><ChatIcon /></button>
      </RowEnd>
    </ToolRow>
    <ToolRow $last>
      <ToolGroup>
        <Grip />
        <Tool icon="cursor" label="Cursor" on />
        <Tool icon="cross" label="Crosshair" />
        <Separator />
        <Tool icon="vline" label="Vertical line" />
        <Tool icon="hline" label="Horizontal line" />
        <Tool icon="trend" label="Trendline" />
        <Tool icon="channel" label="Equidistant channel" />
        <Tool icon="fibo" label="Fibonacci" />
        <Tool icon="text" label="Text" />
        <Tool icon="label" label="Text label" />
        <Split icon="arrows" label="Arrows" />
      </ToolGroup>
      <ToolGroup>
        <Grip />
        {["M1", "M5", "M15", "M30", "H1", "H4", "D1", "W1", "MN"].map((p) => <Period key={p}>{p}</Period>)}
      </ToolGroup>
    </ToolRow>
  </>
);

const MarketWatch = () => {
  const [selected, setSelected] = useState("USOUSD");
  return (
    <Panel>
      <PanelTitle>
        <PanelTitleText>Market Watch: 15:33:48</PanelTitleText>
        <CloseButton aria-label="Close Market Watch"><Cross s={11} /></CloseButton>
      </PanelTitle>
      <PanelBody>
        <WatchView>
          <WatchTable>
            <colgroup><col style={{ width: "37.500%" }} /><col style={{ width: "25%" }} /><col style={{ width: "25%" }} /><col /></colgroup>
            <thead><tr><th>Symbol</th><th>Bid</th><th>Ask</th><th>!</th></tr></thead>
            <tbody>
              {QUOTES.map(([name, bid, ask, spread, up, bg]) => (
                <WatchRow key={name} $bg={bg ?? "#fff"} $ink={up ? "#1a1aff" : "#ff1a1a"} $selected={name === selected} onClick={() => setSelected(name)}>
                  <td><SymbolCell $selected={name === selected}><Tick up={up} />{name}</SymbolCell></td>
                  <td>{bid}</td><td>{ask}</td><td>{spread}</td>
                </WatchRow>
              ))}
              <WatchRow $bg="#ffe9d0" $ink="#1a1aff"><td /><td /><td /><td /></WatchRow>
            </tbody>
          </WatchTable>
        </WatchView>
        <ScrollTrack><ScrollThumb $top={174} $size={30} /></ScrollTrack>
      </PanelBody>
      <Tabs><Tab $active>Symbols</Tab><Tab $sep>Tick Chart</Tab></Tabs>
    </Panel>
  );
};

const Leaf = ({ icon, children, last }: { icon: React.ReactNode; children: string; last?: boolean }) => (
  <TreeRow>
    <Guides width="83" aria-hidden="true">
      <line x1="23.500" x2="23.500" y1="0" y2="100%" />
      <line x1="60.500" x2="60.500" y1="0" y2={last ? "54%" : "100%"} />
      <line x1="61" x2="80" y1="54%" y2="54%" />
    </Guides>
    {icon}
    <TreeLabel>{children}</TreeLabel>
  </TreeRow>
);

const Root = ({ icon, children, open }: { icon: React.ReactNode; children: string; open?: boolean }) => (
  <RootRow>
    <RootGuide width="45" aria-hidden="true">
      <line x1="23.500" x2="23.500" y1="0" y2={open ? "100%" : "50%"} />
      <line x1="32" x2="42" y1="54%" y2="54%" />
    </RootGuide>
    <RootBody>
      <Expander aria-label={open ? `Collapse ${children}` : `Expand ${children}`}>
        <svg width="9" height="9" viewBox="0 0 9 9" stroke="#2a4aa0" strokeWidth="1.500"><path d={open ? "M0 4.500h9" : "M0 4.500h9M4.500 0v9"} /></svg>
      </Expander>
      <RootIcon>{icon}</RootIcon>
      <TreeLabel>{children}</TreeLabel>
    </RootBody>
  </RootRow>
);

const Navigator = () => (
  <Panel $grow>
    <PanelTitle>
      <PanelTitleText>Navigator</PanelTitleText>
      <CloseButton aria-label="Close Navigator"><Cross s={11} /></CloseButton>
    </PanelTitle>
    <PanelBody>
      <TreeView>
        <Tree>
          {["Momentum", "OsMA", "Parabolic", "RSI", "Stochastic", "ZigZag"].map((n) => <Leaf key={n} icon={<FunctionIcon />}>{n}</Leaf>)}
          <Leaf icon={<GlobeIcon />} last>2426 more...</Leaf>
          <Root icon={<ExpertIcon />} open>Expert Advisors</Root>
          <Leaf icon={<ExpertIcon grey />}>ChartTrader.v.3</Leaf>
          <Leaf icon={<ExpertIcon />}>MACD Sample</Leaf>
          <Leaf icon={<ExpertIcon />}>Moving Average</Leaf>
          <Leaf icon={<ExpertIcon />}>RenkoLiveCharts_v4_13EA</Leaf>
          <Leaf icon={<GlobeIcon />} last>1118 more...</Leaf>
          <Root icon={<ScriptIcon />}>Scripts</Root>
        </Tree>
      </TreeView>
      <ScrollTrack><ScrollThumb $top={295} $size={142} /></ScrollTrack>
    </PanelBody>
    <Tabs><Tab $active>Common</Tab><Tab $sep>Favorites</Tab></Tabs>
  </Panel>
);

const CHARTS = ["U30USD,M1", "U30USD,M2 (offline)", "U30USD,M5", "USOUSD,M1", "USOUSD,M2 (offline)", "XAUUSD,M1", "XAUUSD,M15", "EURUSD,M1"];

const Chart = () => {
  const [volume, setVolume] = useState("0.01");
  const step = (d: number) => setVolume(Math.max(0.01, Number(volume) + d).toFixed(2));
  return (
    <ChartColumn>
      <ChartWindow>
        <ChartLine $height={672}><PricePlot /><PriceAxis /></ChartLine>
        <ChartLine $height={2} />
        <ChartLine $height={336}><OscillatorPlot /><OscillatorAxis /></ChartLine>
        <ChartLine><TimeAxis /></ChartLine>
        <TradePanel>
          <Deal $side="sell">
            <DealName $side="sell">SELL</DealName>
            <DealPrice><Small>76</Small><Big>94</Big></DealPrice>
          </Deal>
          <Deal $side="buy">
            <DealName $side="buy">BUY</DealName>
            <DealPrice><Small>76</Small><Big>97</Big></DealPrice>
          </Deal>
          <Volume>
            <VolumeStep aria-label="Decrease volume" onClick={() => step(-0.01)}><Caret /></VolumeStep>
            <VolumeInput aria-label="Volume" value={volume} onChange={(e) => setVolume(e.target.value)} />
            <VolumeStep aria-label="Increase volume" onClick={() => step(0.01)}><CaretUp /></VolumeStep>
          </Volume>
        </TradePanel>
      </ChartWindow>
      <ChartTabs>
        {CHARTS.map((c, i) => <ChartTab key={c} $active={i === 4} $sep={i !== 4 && i !== 3}>{c}</ChartTab>)}
        <TabScroll>
          <svg width="6" height="10" aria-hidden="true"><path d="M6 0v10L0 5z" fill="#9a9a9a" /></svg>
          <svg width="6" height="10" aria-hidden="true"><path d="M0 0v10l6-5z" fill="#9a9a9a" /></svg>
        </TabScroll>
      </ChartTabs>
    </ChartColumn>
  );
};

const COLUMNS: [string, string][] = [
  ["9.850%", "Order"], ["13.730%", "Time"], ["6.880%", "Type"], ["5.310%", "Size"], ["6.850%", "Symbol"], ["7.620%", "Price"],
  ["7.620%", "S / L"], ["7.620%", "T / P"], ["7.620%", "Price"], ["7.580%", "Commission"], ["7.620%", "Swap"], ["11.700%", "Profit"],
];
const TERMINAL_TABS: [string, string?][] = [
  ["Trade"], ["Exposure"], ["Account History"], ["News"], ["Alerts"], ["Mailbox", "7"], ["Market", "114"], ["Signals"],
  ["Articles"], ["Code Base"], ["Experts"], ["Journal"],
];

const TerminalPanel = () => (
  <Terminal>
    <TerminalSide>
      <CloseButton aria-label="Close Terminal"><Cross s={10} /></CloseButton>
      <TerminalTitle>Terminal</TerminalTitle>
    </TerminalSide>
    <TerminalMain>
      <TerminalView>
        <OrderTable>
          <colgroup>{COLUMNS.map(([w], i) => <col key={i} style={{ width: w }} />)}</colgroup>
          <thead>
            <tr>{COLUMNS.map(([, name], i) => <th key={i}>{name}{i === 0 && <SortMark>/</SortMark>}</th>)}</tr>
          </thead>
          <tbody>
            <tr>
              <td><LeadCell><OrderIcon />72451525</LeadCell></td>
              {["2024.02.23 15:33:17", "buy", "0.01", "usousd", "76.95", "0.00", "0.00", "76.94", "-0.02", "0.00"].map((v, i) => <td key={i}>{v}</td>)}
              <td><ProfitCell>-0.10<button aria-label="Close order"><Cross c="#9a9a9a" s={13} /></button></ProfitCell></td>
            </tr>
            <SummaryRow>
              <td colSpan={11}>
                <LeadCell><BalanceIcon /><span>Balance: 5 533.66 USD&nbsp; Equity: 5 533.54&nbsp; Margin: 1.54&nbsp; Free margin: 5 532.00&nbsp; Margin level: 359554.26%</span></LeadCell>
              </td>
              <td>-0.12</td>
            </SummaryRow>
          </tbody>
        </OrderTable>
      </TerminalView>
      <Tabs $indent={3} $tall>
        {TERMINAL_TABS.map(([name, count], i) => (
          <Tab key={name} $active={i === 0} $sep={i > 0}>{name}{count && <Count>{count}</Count>}</Tab>
        ))}
      </Tabs>
    </TerminalMain>
  </Terminal>
);

export default function App() {
  return (
    <Shell>
      <Global />
      <TitleBar>
        <Logo />
        <TitleText>5191918: Coinexx-Demo - Coinexx Ltd - [USOUSD,M2 (offline)]</TitleText>
        <WindowButtons>
          <WindowButton aria-label="Minimize"><svg width="16" height="16"><path d="M0 8.500h15" stroke="#000" /></svg></WindowButton>
          <WindowButton aria-label="Maximize"><svg width="16" height="16"><rect x="1" y="1" width="14" height="14" rx="1.500" fill="none" stroke="#000" strokeWidth="1.500" /></svg></WindowButton>
          <WindowButton aria-label="Close"><svg width="16" height="16"><path d="M.5.5l15 15M15.500.5l-15 15" stroke="#000" strokeWidth="1.500" /></svg></WindowButton>
        </WindowButtons>
      </TitleBar>
      <MenuBar>
        <MdiIcon />
        {["File", "View", "Insert", "Charts", "Tools", "Window", "Help"].map((m) => <MenuItem key={m}>{m}</MenuItem>)}
        <MdiButtons>
          <MdiButton aria-label="Minimize chart"><svg width="12" height="14"><path d="M1 12h10" stroke="#7b8b98" strokeWidth="3" /></svg></MdiButton>
          <MdiButton aria-label="Restore chart"><svg width="16" height="15" fill="none" stroke="#7b8b98" strokeWidth="2"><path d="M5 4V2h9v7h-2" strokeWidth="2.500" /><rect x="1" y="6" width="9" height="7" /></svg></MdiButton>
          <MdiButton aria-label="Close chart"><Cross c="#7b8b98" s={13} w={3.5} /></MdiButton>
        </MdiButtons>
      </MenuBar>
      <Toolbars />
      <Workspace>
        <SideColumn><MarketWatch /><Navigator /></SideColumn>
        <Chart />
      </Workspace>
      <TerminalPanel />
      <StatusBar>
        <StatusCell>For Help, press F1</StatusCell>
        <StatusCell $w={203}>Default</StatusCell>
        <StatusCell $w={179} /><StatusCell $w={124} /><StatusCell $w={124} /><StatusCell $w={119} /><StatusCell $w={124} /><StatusCell $w={115} />
        <StatusCell $w={251}>
          <LinkMeter />396849/31 kb
          <ResizeGrip width="18" height="18" stroke="#9a9a9a" strokeWidth="1.500" aria-hidden="true"><path d="M2 18L18 2M10 18l8-8" /></ResizeGrip>
        </StatusCell>
      </StatusBar>
    </Shell>
  );
}
